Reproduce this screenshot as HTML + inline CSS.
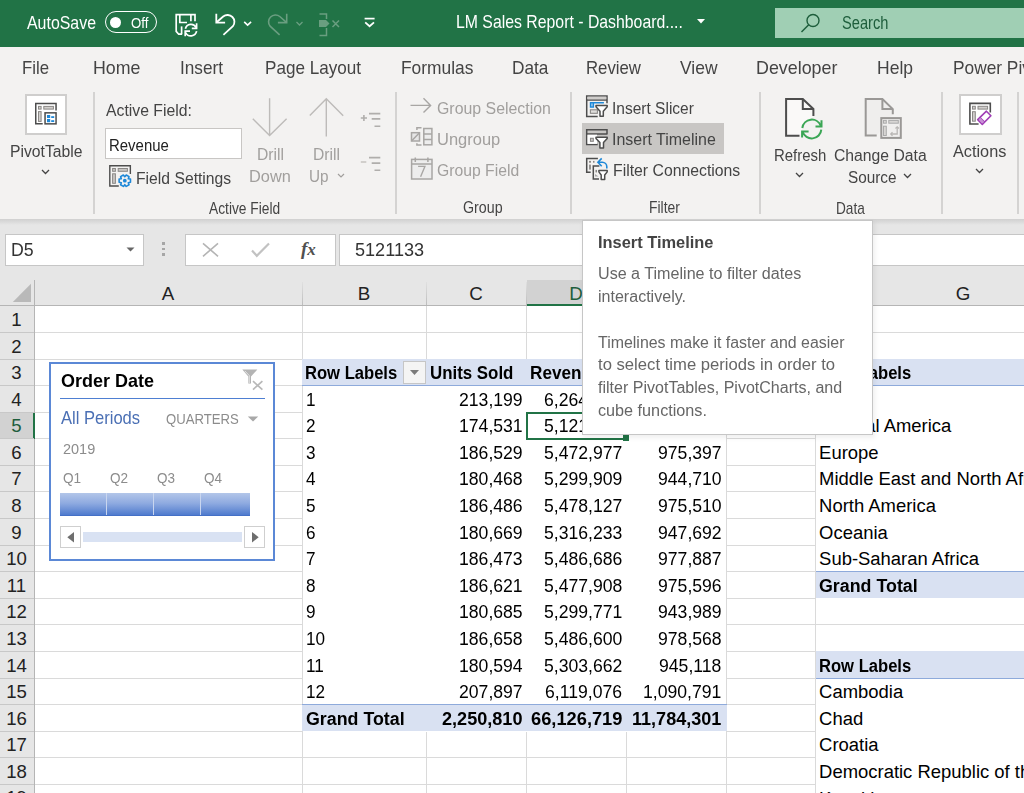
<!DOCTYPE html>
<html><head><meta charset="utf-8"><style>
html,body{margin:0;padding:0;}
body{width:1024px;height:793px;overflow:hidden;position:relative;background:#fff;font-family:'Liberation Sans',sans-serif;}
.t{position:absolute;white-space:pre;line-height:0;transform-origin:0 0;}
.r{position:absolute;box-sizing:border-box;}
svg.r{overflow:visible;}
</style></head><body>
<div class="r" style="left:0px;top:0px;width:1024px;height:47px;background:#217346"></div>
<div class="t" style="left:27.00px;top:22.95px;font-size:17.44px;font-weight:normal;color:#fff;transform:scaleX(0.9126);">AutoSave</div>
<div class="r" style="left:105px;top:11px;width:52px;height:22px;border:1.3px solid #fff;border-radius:11px"></div>
<div class="r" style="left:109.5px;top:16.5px;width:11px;height:11px;background:#fff;border-radius:50%"></div>
<div class="t" style="left:131.00px;top:23.06px;font-size:14.24px;font-weight:normal;color:#fff;transform:scaleX(0.9254);">Off</div>
<div class="t" style="left:456.00px;top:22.20px;font-size:18.17px;font-weight:normal;color:#fff;transform:scaleX(0.8713);">LM Sales Report - Dashboard....</div>
<svg class="r" style="left:697px;top:19px" width="8" height="5" viewBox="0 0 8 5"><path d="M0 0H8L4 4.5Z" fill="#fff"/></svg>
<div class="r" style="left:775px;top:8px;width:249px;height:30px;background:#a0cfb4"></div>
<svg class="r" style="left:800px;top:13px" width="21" height="20" viewBox="0 0 21 20"><circle cx="13" cy="7.5" r="6" fill="none" stroke="#1e5e3c" stroke-width="1.4"/><path d="M8.7 11.8L1.5 19" stroke="#1e5e3c" stroke-width="1.5"/></svg>
<div class="t" style="left:842.00px;top:23.45px;font-size:17.44px;font-weight:normal;color:#1e5e3c;transform:scaleX(0.8392);">Search</div>
<div class="r" style="left:0px;top:47px;width:1024px;height:172px;background:#f3f2f1"></div>
<div class="r" style="left:0px;top:219px;width:1024px;height:61px;background:#e6e6e6"></div>
<div class="r" style="left:0px;top:219px;width:1024px;height:6px;background:linear-gradient(#d0d0d0,#e6e6e6)"></div>
<div class="t" style="left:21.50px;top:67.70px;font-size:18.17px;font-weight:normal;color:#444444;transform:scaleX(0.9230);">File</div>
<div class="t" style="left:92.50px;top:67.70px;font-size:18.17px;font-weight:normal;color:#444444;transform:scaleX(0.9792);">Home</div>
<div class="t" style="left:180.00px;top:67.70px;font-size:18.17px;font-weight:normal;color:#444444;transform:scaleX(0.9467);">Insert</div>
<div class="t" style="left:264.50px;top:67.70px;font-size:18.17px;font-weight:normal;color:#444444;transform:scaleX(0.9410);">Page Layout</div>
<div class="t" style="left:401.00px;top:67.70px;font-size:18.17px;font-weight:normal;color:#444444;transform:scaleX(0.9569);">Formulas</div>
<div class="t" style="left:512.00px;top:67.70px;font-size:18.17px;font-weight:normal;color:#444444;transform:scaleX(0.9499);">Data</div>
<div class="t" style="left:586.00px;top:67.70px;font-size:18.17px;font-weight:normal;color:#444444;transform:scaleX(0.9229);">Review</div>
<div class="t" style="left:679.50px;top:67.70px;font-size:18.17px;font-weight:normal;color:#444444;transform:scaleX(0.9600);">View</div>
<div class="t" style="left:756.00px;top:67.70px;font-size:18.17px;font-weight:normal;color:#444444;transform:scaleX(0.9837);">Developer</div>
<div class="t" style="left:877.00px;top:67.70px;font-size:18.17px;font-weight:normal;color:#444444;transform:scaleX(0.9642);">Help</div>
<div class="t" style="left:953.00px;top:67.70px;font-size:18.17px;font-weight:normal;color:#444444;transform:scaleX(0.9533);">Power Pivot</div>
<div class="r" style="left:93px;top:92px;width:2px;height:122px;background:#d4d3d2"></div>
<div class="r" style="left:395px;top:92px;width:2px;height:122px;background:#d4d3d2"></div>
<div class="r" style="left:570px;top:92px;width:2px;height:122px;background:#d4d3d2"></div>
<div class="r" style="left:759px;top:92px;width:2px;height:122px;background:#d4d3d2"></div>
<div class="r" style="left:941px;top:92px;width:2px;height:122px;background:#d4d3d2"></div>
<div class="r" style="left:1017px;top:92px;width:2px;height:122px;background:#d4d3d2"></div>
<div class="r" style="left:25px;top:94px;width:42px;height:41px;background:#fff;border:2px solid #cfcecd"></div>
<div class="t" style="left:10.00px;top:151.30px;font-size:16.42px;font-weight:normal;color:#444444;transform:scaleX(0.9578);">PivotTable</div>
<svg class="r" style="left:41px;top:169px" width="9" height="6" viewBox="0 0 9 6"><path d="M1 1L4.5 4.5L8 1" fill="none" stroke="#444" stroke-width="1.3"/></svg>
<div class="t" style="left:105.70px;top:109.80px;font-size:16.42px;font-weight:normal;color:#444444;transform:scaleX(0.9616);">Active Field:</div>
<div class="r" style="left:105px;top:128px;width:137px;height:31px;background:#fff;border:1px solid #c8c6c4"></div>
<div class="t" style="left:109.40px;top:144.80px;font-size:16.42px;font-weight:normal;color:#222;transform:scaleX(0.9106);">Revenue</div>
<div class="t" style="left:135.70px;top:177.80px;font-size:16.42px;font-weight:normal;color:#444444;transform:scaleX(0.9575);">Field Settings</div>
<div class="t" style="left:256.60px;top:154.30px;font-size:16.42px;font-weight:normal;color:#a19f9d;transform:scaleX(0.9558);">Drill</div>
<div class="t" style="left:249.00px;top:175.80px;font-size:16.42px;font-weight:normal;color:#a19f9d;transform:scaleX(0.9961);">Down</div>
<div class="t" style="left:313.00px;top:154.30px;font-size:16.42px;font-weight:normal;color:#a19f9d;transform:scaleX(0.9558);">Drill</div>
<div class="t" style="left:309.40px;top:175.80px;font-size:16.42px;font-weight:normal;color:#a19f9d;transform:scaleX(0.9323);">Up</div>
<svg class="r" style="left:336.5px;top:172.5px" width="8" height="6" viewBox="0 0 8 6"><path d="M1 1L4 4L7 1" fill="none" stroke="#a19f9d" stroke-width="1.2"/></svg>
<div class="t" style="left:208.80px;top:208.55px;font-size:15.70px;font-weight:normal;color:#444444;transform:scaleX(0.8773);">Active Field</div>
<div class="t" style="left:437.00px;top:108.30px;font-size:16.42px;font-weight:normal;color:#a19f9d;transform:scaleX(0.9680);">Group Selection</div>
<div class="t" style="left:437.00px;top:139.30px;font-size:16.42px;font-weight:normal;color:#a19f9d;transform:scaleX(1.0050);">Ungroup</div>
<div class="t" style="left:437.00px;top:170.30px;font-size:16.42px;font-weight:normal;color:#a19f9d;transform:scaleX(0.9590);">Group Field</div>
<div class="t" style="left:462.70px;top:208.05px;font-size:15.70px;font-weight:normal;color:#444444;transform:scaleX(0.9074);">Group</div>
<div class="r" style="left:582px;top:123px;width:142px;height:31px;background:#c8c6c4"></div>
<div class="t" style="left:612.00px;top:108.30px;font-size:16.42px;font-weight:normal;color:#444444;transform:scaleX(0.9456);">Insert Slicer</div>
<div class="t" style="left:612.00px;top:139.30px;font-size:16.42px;font-weight:normal;color:#444444;transform:scaleX(0.9734);">Insert Timeline</div>
<div class="t" style="left:612.60px;top:170.30px;font-size:16.42px;font-weight:normal;color:#444444;transform:scaleX(0.9624);">Filter Connections</div>
<div class="t" style="left:649.00px;top:208.05px;font-size:15.70px;font-weight:normal;color:#444444;transform:scaleX(0.8838);">Filter</div>
<div class="t" style="left:774.20px;top:154.80px;font-size:16.42px;font-weight:normal;color:#444444;transform:scaleX(0.9098);">Refresh</div>
<svg class="r" style="left:795px;top:172px" width="9" height="6" viewBox="0 0 9 6"><path d="M1 1L4.5 4.5L8 1" fill="none" stroke="#444" stroke-width="1.3"/></svg>
<div class="t" style="left:833.50px;top:154.80px;font-size:16.42px;font-weight:normal;color:#444444;transform:scaleX(0.9585);">Change Data</div>
<div class="t" style="left:848.40px;top:176.80px;font-size:16.42px;font-weight:normal;color:#444444;transform:scaleX(0.9334);">Source</div>
<svg class="r" style="left:902.5px;top:172.5px" width="9" height="6" viewBox="0 0 9 6"><path d="M1 1L4.5 4.5L8 1" fill="none" stroke="#444" stroke-width="1.3"/></svg>
<div class="t" style="left:835.50px;top:208.55px;font-size:15.70px;font-weight:normal;color:#444444;transform:scaleX(0.8705);">Data</div>
<div class="r" style="left:959px;top:94px;width:43px;height:41px;background:#fff;border:2px solid #cfcecd"></div>
<div class="t" style="left:952.80px;top:151.30px;font-size:16.42px;font-weight:normal;color:#444444;transform:scaleX(0.9912);">Actions</div>
<svg class="r" style="left:975px;top:168px" width="9" height="6" viewBox="0 0 9 6"><path d="M1 1L4.5 4.5L8 1" fill="none" stroke="#444" stroke-width="1.3"/></svg>
<svg class="r" style="left:170px;top:8px" width="30" height="32" viewBox="0 0 30 32"><g fill="none" stroke="#ffffff" stroke-width="1.7"><path d="M12.1 26.2H8.7L6.2 23.4V6.7H25V13.3"/><path d="M9.8 6.7V14.5H17"/><path d="M20.9 6.7V13.3"/><path d="M11.6 18.4V26.2"/><path d="M15.4 20.8A5.8 5.8 0 0 1 26.2 19.6"/><path d="M26.6 15.2V20.4H21.8"/><path d="M26.6 23.2A5.8 5.8 0 0 1 15.6 24.5"/><path d="M15.2 28.2V23.2H20"/></g></svg>
<svg class="r" style="left:210px;top:8px" width="50" height="32" viewBox="0 0 50 32"><g fill="none" stroke="#ffffff" stroke-width="1.8"><path d="M6.3 5.8V14.6H15.1"/><path d="M6.6 14.3L13.2 8.5A6.9 6.9 0 0 1 22.9 18.2L13.4 26.9"/><path d="M34.2 13.9L37.6 17.1L41.1 13.9" stroke-width="1.6"/></g></svg>
<svg class="r" style="left:260px;top:8px" width="50" height="32" viewBox="0 0 50 32"><g fill="none" stroke="#6a9e80" stroke-width="1.6"><path d="M26.7 5.8V14.6H17.9"/><path d="M26.4 14.3L19.8 8.5A6.9 6.9 0 0 0 10.1 18.2L19.6 26.9"/><path d="M36.5 14L39.5 17L42.5 14" stroke-width="1.3"/></g></svg>
<svg class="r" style="left:314px;top:8px" width="32" height="32" viewBox="0 0 32 32"><g fill="none" stroke="#6a9e80" stroke-width="1.5"><path d="M5.5 6H12.5V11"/><path d="M12.5 20V27.5H5.5"/></g><path d="M5 12H12L15.5 15.5L12 19H5Z" fill="#6a9e80"/><path d="M18.5 12.5L25 19M25 12.5L18.5 19" stroke="#6a9e80" stroke-width="1.5"/></svg>
<svg class="r" style="left:362px;top:15px" width="16" height="16" viewBox="0 0 16 16"><path d="M2.6 3.6H12.6" stroke="#ffffff" stroke-width="1.7"/><path d="M3.2 7.4L7.6 11.2L12 7.4" fill="none" stroke="#ffffff" stroke-width="1.8"/></svg>
<svg class="r" style="left:30px;top:98px" width="32" height="32" viewBox="0 0 32 32"><path d="M12.7 25.85H5.75V5.55H26.05V12.5" fill="none" stroke="#4d4d4d" stroke-width="1.5"/><g fill="#d2d0ce" stroke="#8a8886" stroke-width="1"><rect x="8.5" y="8.4" width="2.6" height="2.7"/><rect x="13.8" y="8.4" width="9.6" height="2.7"/><rect x="8.5" y="13.6" width="2.6" height="9.8"/></g><rect x="15.05" y="14.85" width="11" height="11" fill="#fff" stroke="#4d4d4d" stroke-width="1.5"/><g fill="#1e88d8"><rect x="17" y="17" width="3.2" height="3"/><rect x="17" y="21" width="3.2" height="3.2"/><rect x="21.2" y="18.2" width="3" height="1.8"/><rect x="21.2" y="22.2" width="3" height="1.8"/></g></svg>
<svg class="r" style="left:105px;top:162px" width="32" height="28" viewBox="0 0 32 28"><path d="M13.8 24H4.8V3.7H25.35V12" fill="none" stroke="#4d4d4d" stroke-width="1.4"/><g fill="#c8c6c4" stroke="#8a8886" stroke-width="1"><rect x="7.6" y="6.5" width="2.8" height="2.8"/><rect x="13.2" y="6.5" width="9.2" height="2.8"/><rect x="7.6" y="11.8" width="2.8" height="9.5"/></g><circle cx="19.8" cy="18.7" r="6.6" fill="#f3f2f1"/><path d="M23.26 16.70L25.47 17.07L25.47 20.33L23.26 20.70L24.04 22.80L21.23 24.42L19.80 22.70L18.37 24.42L15.56 22.80L16.34 20.70L14.13 20.33L14.13 17.07L16.34 16.70L15.56 14.60L18.37 12.98L19.80 14.70L21.23 12.98L24.04 14.60Z" fill="none" stroke="#1e88d8" stroke-width="1.6" stroke-linejoin="round"/><circle cx="19.8" cy="18.7" r="1.9" fill="#1e88d8"/></svg>
<svg class="r" style="left:248px;top:92px" width="140" height="84" viewBox="0 0 140 84"><g fill="none" stroke="#bdbbb9" stroke-width="1.4"><path d="M21.6 6.2V43.5M4.8 26.7L21.6 43.5L38.6 26.7"/><path d="M78.3 6.6V44.4M61.8 23.5L78.3 6.8L95.2 23.7"/></g><g stroke="#b0aeac" stroke-width="1.6"><path d="M112.8 26H119M115.9 22.9V29.1"/><path d="M121 21.6H132.3M123.7 26.9H132.3M126.5 34.2H132.3"/><path d="M112.8 70H118.3" stroke="#c8c6c4"/><path d="M121 65.6H132.3M123.7 71.1H132.3M126.5 78.2H132.3"/></g></svg>
<svg class="r" style="left:406px;top:94px" width="30" height="90" viewBox="0 0 30 90"><g fill="none" stroke="#a8a6a4" stroke-width="1.4"><path d="M4.5 11.4H24.6M17.5 4.3L24.6 11.4L17.5 18.6"/></g><g transform="translate(0,28)" fill="none" stroke="#a8a6a4" stroke-width="1.5"><rect x="5.5" y="10.7" width="8" height="8.3" fill="#e6e6e6"/><path d="M5.5 19L13.5 10.7"/><path d="M10.9 8.1V5.8H15.5M10.9 21.2V23H15.5"/><rect x="17.8" y="6.5" width="8.1" height="16.3" fill="#ededed"/><path d="M17.8 11.9H25.9M17.8 17.4H25.9"/></g><g transform="translate(0,60)" fill="none" stroke="#a8a6a4" stroke-width="1.5"><rect x="5.6" y="5.4" width="20.4" height="19.6" fill="#ededed"/><path d="M5.6 10H26M9.3 3.4V7.9M21.9 3.4V7.9"/><path d="M12.1 12.4H18.9L14.6 22.7" stroke-width="1.4"/></g></svg>
<svg class="r" style="left:582px;top:92px" width="30" height="30" viewBox="0 0 30 30"><path d="M15.7 24.4H4.7V4H25V11.2M4.7 8H25" fill="none" stroke="#4d4d4d" stroke-width="1.5"/><rect x="5.4" y="4.7" width="18.9" height="2.6" fill="#cfcdcb"/><path d="M8.5 10.75H21.9" stroke="#1e88d8" stroke-width="1.5"/><rect x="8.5" y="10.75" width="2.9" height="4.3" fill="#9ccbf0" stroke="#1e88d8" stroke-width="1.4"/><rect x="8.4" y="17.8" width="7" height="3.5" fill="#e0dedc" stroke="#8a8886" stroke-width="1.1"/><path d="M14 13.6H25.2V14.8L21.3 19.3V24.3H18V19.3L14 14.8Z" fill="#fff" stroke="#4d4d4d" stroke-width="1.5" stroke-linejoin="round"/></svg>
<svg class="r" style="left:582px;top:124px" width="30" height="30" viewBox="0 0 30 30"><rect x="4.7" y="5.7" width="20.3" height="4.2" fill="#c8c6c4"/><path d="M15.7 20.6H4.7V5.7H25V10.5M4.7 9.9H25" fill="none" stroke="#4d4d4d" stroke-width="1.5"/><rect x="5.5" y="10.7" width="9.5" height="9.2" fill="#fff"/><rect x="8.5" y="14.3" width="2.8" height="3" fill="#d0cecc" stroke="#8a8886" stroke-width="1.1"/><path d="M14 13.2H25.2V14.4L21.5 18.5V24.1H17.9V18.5L14 14.4Z" fill="#fff" stroke="#4d4d4d" stroke-width="1.5" stroke-linejoin="round"/></svg>
<svg class="r" style="left:582px;top:154px" width="30" height="30" viewBox="0 0 30 30"><path d="M8.7 18.2H4.7V4.5H15.9" fill="none" stroke="#4d4d4d" stroke-width="1.5"/><g fill="#8a8886"><rect x="7" y="6.9" width="2" height="1.8"/><rect x="11" y="6.9" width="1.5" height="1.8"/><rect x="7.1" y="10.6" width="1.8" height="5"/></g><path d="M17 25H11.3V12H17.4" fill="none" stroke="#4d4d4d" stroke-width="1.5"/><rect x="13.5" y="15.9" width="1.5" height="2.5" fill="#8a8886"/><path d="M13 22.5H16.6L13 20Z" fill="#aaa"/><path d="M16.9 16.6H25.2V17.9L22.7 21V25.4H19.2V21L16.9 17.9Z" fill="#fff" stroke="#4d4d4d" stroke-width="1.5" stroke-linejoin="round"/><path d="M24.8 14.6V12.8A4.5 4.5 0 0 0 20.3 8.3H16.2M19.7 4.4L15.9 8.3L19.7 12.2" fill="none" stroke="#1e88d8" stroke-width="1.6"/></svg>
<svg class="r" style="left:780px;top:94px" width="50" height="50" viewBox="0 0 50 50"><path d="M19.5 41.8H6.1V5H22.8L33.4 15V22" fill="#faf9f8" stroke="#4d4d4d" stroke-width="2"/><path d="M22.8 5V15H33.4" fill="none" stroke="#4d4d4d" stroke-width="2"/><circle cx="31.8" cy="34.7" r="10" fill="#f3f2f1"/><g fill="none" stroke="#3aa655" stroke-width="2"><path d="M22.3 34A9.6 9.6 0 0 1 40.8 31.8"/><path d="M41.5 26.3V32.4H35.5"/><path d="M41.3 35.6A9.6 9.6 0 0 1 22.6 37.8"/><path d="M22.1 43.6V37.4H28.6"/></g></svg>
<svg class="r" style="left:860px;top:94px" width="50" height="50" viewBox="0 0 50 50"><path d="M16.7 41.6H5.7V5H22.4L32.8 15.1V20.2" fill="#efeeed" stroke="#9a9896" stroke-width="2"/><path d="M22.4 5V15.1H32.8" fill="none" stroke="#9a9896" stroke-width="2"/><rect x="21.3" y="24.1" width="19.5" height="19.8" fill="#f0efee" stroke="#9a9896" stroke-width="2"/><g fill="#d8d6d4" stroke="#aaa" stroke-width="1"><rect x="23.5" y="26.4" width="2.8" height="2.8"/><rect x="28.8" y="26.4" width="9.5" height="2.8"/><rect x="23.5" y="32.2" width="2.8" height="9.3"/></g><path d="M37.2 33V40H31" fill="none" stroke="#b8b6b4" stroke-width="1.3"/><path d="M35.5 34.5L37.2 32.8L38.9 34.5M32.5 38.3L30.8 40L32.5 41.7" fill="none" stroke="#b8b6b4" stroke-width="1.3"/></svg>
<svg class="r" style="left:960px;top:96px" width="40" height="36" viewBox="0 0 40 36"><path d="M18.6 28H9.9V7.4H30.3V16.4" fill="none" stroke="#4d4d4d" stroke-width="1.6"/><g fill="#d0cecc" stroke="#8a8886" stroke-width="1"><rect x="12.5" y="10.3" width="2.8" height="2.8"/><rect x="18" y="10.3" width="9.6" height="2.8"/><rect x="12.5" y="15.7" width="2.8" height="9.5"/></g><path d="M17.7 23.6L26.4 15.2L30.9 19.8L22.3 28.4Z" fill="#fff" stroke="#a03db5" stroke-width="1.6" stroke-linejoin="round"/><path d="M20 21.4L24.6 26" stroke="#a03db5" stroke-width="1.2"/><path d="M18.6 23.6L22.3 27.4L24 25.7L20.3 22Z" fill="#c890d6"/></svg>
<div class="r" style="left:5px;top:234px;width:139px;height:32px;background:#fff;border:1px solid #c6c6c6"></div>
<div class="t" style="left:11.00px;top:250.25px;font-size:18.02px;font-weight:normal;color:#333;transform:scaleX(0.9840);">D5</div>
<svg class="r" style="left:126px;top:247px" width="9" height="5" viewBox="0 0 9 5"><path d="M0.5 0.5H8.5L4.5 4.5Z" fill="#666"/></svg>
<div class="r" style="left:162.3px;top:242.3px;width:2.6px;height:2.6px;background:#a6a6a6"></div>
<div class="r" style="left:162.3px;top:247.8px;width:2.6px;height:2.6px;background:#a6a6a6"></div>
<div class="r" style="left:162.3px;top:253.3px;width:2.6px;height:2.6px;background:#a6a6a6"></div>
<div class="r" style="left:185px;top:234px;width:151px;height:32px;background:#fff;border:1px solid #c6c6c6"></div>
<svg class="r" style="left:200px;top:240px" width="22" height="20" viewBox="0 0 22 20"><path d="M3 3.3L18 16.3M18 3.3L3 16.3" stroke="#b4b4b4" stroke-width="1.6"/></svg>
<svg class="r" style="left:249px;top:240px" width="24" height="20" viewBox="0 0 24 20"><path d="M3 10.5L7.8 15.8L20 3.5" fill="none" stroke="#c2c2c2" stroke-width="2.2"/></svg>
<div class="t" style="left:301px;top:249px;font-family:'Liberation Serif',serif;font-style:italic;font-weight:bold;font-size:19px;color:#505050;letter-spacing:0px">f<span style="font-size:17px">x</span></div>
<div class="r" style="left:339px;top:234px;width:700px;height:32px;background:#fff;border:1px solid #c6c6c6"></div>
<div class="t" style="left:355.20px;top:250.25px;font-size:18.02px;font-weight:normal;color:#333;transform:scaleX(1.0036);">5121133</div>
<div class="r" style="left:0px;top:280px;width:1024px;height:26px;background:#e6e6e6"></div>
<div class="r" style="left:0px;top:306px;width:35px;height:500px;background:#e6e6e6"></div>
<div class="r" style="left:35px;top:306px;width:989px;height:500px;background:#fff"></div>
<svg class="r" style="left:12px;top:283px" width="20" height="20" viewBox="0 0 20 20"><path d="M19 0.7V19H0.8Z" fill="#b9b9b9"/></svg>
<div class="r" style="left:34px;top:280px;width:1px;height:520px;background:#b5b5b5"></div>
<div class="r" style="left:0px;top:305px;width:1024px;height:1px;background:#b5b5b5"></div>
<div class="r" style="left:527px;top:280px;width:100px;height:25px;background:#d2d2d2"></div>
<div class="r" style="left:527px;top:304px;width:100px;height:2px;background:#217346"></div>
<div class="r" style="left:302px;top:282px;width:1px;height:23px;background:linear-gradient(#e0e0e0,#bdbdbd)"></div>
<div class="r" style="left:426px;top:282px;width:1px;height:23px;background:linear-gradient(#e0e0e0,#bdbdbd)"></div>
<div class="r" style="left:526px;top:282px;width:1px;height:23px;background:linear-gradient(#e0e0e0,#bdbdbd)"></div>
<div class="r" style="left:626px;top:282px;width:1px;height:23px;background:linear-gradient(#e0e0e0,#bdbdbd)"></div>
<div class="r" style="left:726px;top:282px;width:1px;height:23px;background:linear-gradient(#e0e0e0,#bdbdbd)"></div>
<div class="r" style="left:815px;top:282px;width:1px;height:23px;background:linear-gradient(#e0e0e0,#bdbdbd)"></div>
<div class="r" style="left:1111px;top:282px;width:1px;height:23px;background:linear-gradient(#e0e0e0,#bdbdbd)"></div>
<div class="t" style="left:161.72px;top:294.49px;font-size:18.75px;font-weight:normal;color:#222;">A</div>
<div class="t" style="left:357.77px;top:294.49px;font-size:18.75px;font-weight:normal;color:#222;">B</div>
<div class="t" style="left:469.25px;top:294.49px;font-size:18.75px;font-weight:normal;color:#222;">C</div>
<div class="t" style="left:569.25px;top:294.49px;font-size:18.75px;font-weight:normal;color:#1e5e3c;">D</div>
<div class="t" style="left:669.77px;top:294.49px;font-size:18.75px;font-weight:normal;color:#222;">E</div>
<div class="t" style="left:764.78px;top:294.49px;font-size:18.75px;font-weight:normal;color:#222;">F</div>
<div class="t" style="left:955.69px;top:294.49px;font-size:18.75px;font-weight:normal;color:#222;">G</div>
<div class="r" style="left:0px;top:413px;width:34px;height:26px;background:#d2d2d2"></div>
<div class="r" style="left:33px;top:413px;width:2px;height:26px;background:#217346"></div>
<div class="r" style="left:0px;top:332px;width:34px;height:1px;background:#c8c8c8"></div>
<div class="t" style="left:11.34px;top:320.34px;font-size:18.60px;font-weight:normal;color:#222;">1</div>
<div class="r" style="left:0px;top:359px;width:34px;height:1px;background:#c8c8c8"></div>
<div class="t" style="left:11.34px;top:347.34px;font-size:18.60px;font-weight:normal;color:#222;">2</div>
<div class="r" style="left:0px;top:385px;width:34px;height:1px;background:#c8c8c8"></div>
<div class="t" style="left:11.34px;top:373.34px;font-size:18.60px;font-weight:normal;color:#222;">3</div>
<div class="r" style="left:0px;top:412px;width:34px;height:1px;background:#c8c8c8"></div>
<div class="t" style="left:11.34px;top:400.34px;font-size:18.60px;font-weight:normal;color:#222;">4</div>
<div class="r" style="left:0px;top:438px;width:34px;height:1px;background:#c8c8c8"></div>
<div class="t" style="left:11.34px;top:426.34px;font-size:18.60px;font-weight:normal;color:#1e5e3c;">5</div>
<div class="r" style="left:0px;top:465px;width:34px;height:1px;background:#c8c8c8"></div>
<div class="t" style="left:11.34px;top:453.34px;font-size:18.60px;font-weight:normal;color:#222;">6</div>
<div class="r" style="left:0px;top:491px;width:34px;height:1px;background:#c8c8c8"></div>
<div class="t" style="left:11.34px;top:479.34px;font-size:18.60px;font-weight:normal;color:#222;">7</div>
<div class="r" style="left:0px;top:518px;width:34px;height:1px;background:#c8c8c8"></div>
<div class="t" style="left:11.34px;top:506.34px;font-size:18.60px;font-weight:normal;color:#222;">8</div>
<div class="r" style="left:0px;top:545px;width:34px;height:1px;background:#c8c8c8"></div>
<div class="t" style="left:11.34px;top:533.34px;font-size:18.60px;font-weight:normal;color:#222;">9</div>
<div class="r" style="left:0px;top:571px;width:34px;height:1px;background:#c8c8c8"></div>
<div class="t" style="left:6.17px;top:559.34px;font-size:18.60px;font-weight:normal;color:#222;">10</div>
<div class="r" style="left:0px;top:598px;width:34px;height:1px;background:#c8c8c8"></div>
<div class="t" style="left:6.83px;top:586.34px;font-size:18.60px;font-weight:normal;color:#222;">11</div>
<div class="r" style="left:0px;top:624px;width:34px;height:1px;background:#c8c8c8"></div>
<div class="t" style="left:6.17px;top:612.34px;font-size:18.60px;font-weight:normal;color:#222;">12</div>
<div class="r" style="left:0px;top:651px;width:34px;height:1px;background:#c8c8c8"></div>
<div class="t" style="left:6.17px;top:639.34px;font-size:18.60px;font-weight:normal;color:#222;">13</div>
<div class="r" style="left:0px;top:678px;width:34px;height:1px;background:#c8c8c8"></div>
<div class="t" style="left:6.17px;top:666.34px;font-size:18.60px;font-weight:normal;color:#222;">14</div>
<div class="r" style="left:0px;top:704px;width:34px;height:1px;background:#c8c8c8"></div>
<div class="t" style="left:6.17px;top:692.34px;font-size:18.60px;font-weight:normal;color:#222;">15</div>
<div class="r" style="left:0px;top:731px;width:34px;height:1px;background:#c8c8c8"></div>
<div class="t" style="left:6.17px;top:719.34px;font-size:18.60px;font-weight:normal;color:#222;">16</div>
<div class="r" style="left:0px;top:757px;width:34px;height:1px;background:#c8c8c8"></div>
<div class="t" style="left:6.17px;top:745.34px;font-size:18.60px;font-weight:normal;color:#222;">17</div>
<div class="r" style="left:0px;top:784px;width:34px;height:1px;background:#c8c8c8"></div>
<div class="t" style="left:6.17px;top:772.34px;font-size:18.60px;font-weight:normal;color:#222;">18</div>
<div class="r" style="left:0px;top:810px;width:34px;height:1px;background:#c8c8c8"></div>
<div class="t" style="left:6.17px;top:798.34px;font-size:18.60px;font-weight:normal;color:#222;">19</div>
<div class="r" style="left:35px;top:332px;width:989px;height:1px;background:#dadada"></div>
<div class="r" style="left:35px;top:359px;width:989px;height:1px;background:#dadada"></div>
<div class="r" style="left:35px;top:385px;width:989px;height:1px;background:#dadada"></div>
<div class="r" style="left:35px;top:412px;width:989px;height:1px;background:#dadada"></div>
<div class="r" style="left:35px;top:438px;width:989px;height:1px;background:#dadada"></div>
<div class="r" style="left:35px;top:465px;width:989px;height:1px;background:#dadada"></div>
<div class="r" style="left:35px;top:491px;width:989px;height:1px;background:#dadada"></div>
<div class="r" style="left:35px;top:518px;width:989px;height:1px;background:#dadada"></div>
<div class="r" style="left:35px;top:545px;width:989px;height:1px;background:#dadada"></div>
<div class="r" style="left:35px;top:571px;width:989px;height:1px;background:#dadada"></div>
<div class="r" style="left:35px;top:598px;width:989px;height:1px;background:#dadada"></div>
<div class="r" style="left:35px;top:624px;width:989px;height:1px;background:#dadada"></div>
<div class="r" style="left:35px;top:651px;width:989px;height:1px;background:#dadada"></div>
<div class="r" style="left:35px;top:678px;width:989px;height:1px;background:#dadada"></div>
<div class="r" style="left:35px;top:704px;width:989px;height:1px;background:#dadada"></div>
<div class="r" style="left:35px;top:731px;width:989px;height:1px;background:#dadada"></div>
<div class="r" style="left:35px;top:757px;width:989px;height:1px;background:#dadada"></div>
<div class="r" style="left:35px;top:784px;width:989px;height:1px;background:#dadada"></div>
<div class="r" style="left:302px;top:306px;width:1px;height:487px;background:#dadada"></div>
<div class="r" style="left:426px;top:306px;width:1px;height:487px;background:#dadada"></div>
<div class="r" style="left:526px;top:306px;width:1px;height:487px;background:#dadada"></div>
<div class="r" style="left:626px;top:306px;width:1px;height:487px;background:#dadada"></div>
<div class="r" style="left:726px;top:306px;width:1px;height:487px;background:#dadada"></div>
<div class="r" style="left:815px;top:306px;width:1px;height:487px;background:#dadada"></div>
<div class="r" style="left:303px;top:360px;width:423px;height:372px;background:#fff"></div>
<div class="r" style="left:302px;top:359px;width:425px;height:26px;background:#d9e1f2"></div>
<div class="r" style="left:302px;top:385px;width:425px;height:1px;background:#8eaadb"></div>
<div class="r" style="left:302px;top:705px;width:425px;height:26px;background:#d9e1f2"></div>
<div class="r" style="left:302px;top:704px;width:425px;height:1px;background:#8eaadb"></div>
<div class="t" style="left:305.40px;top:372.99px;font-size:18.46px;font-weight:bold;color:#000;transform:scaleX(0.9000);">Row Labels</div>
<div class="r" style="left:403px;top:361px;width:23px;height:23px;background:#f4f4f4;border:1px solid #c6c6c6"></div>
<svg class="r" style="left:409px;top:369px" width="11" height="7" viewBox="0 0 11 7"><path d="M1 1H10L5.5 6Z" fill="#7a7a7a"/></svg>
<div class="t" style="left:429.70px;top:372.99px;font-size:18.46px;font-weight:bold;color:#000;transform:scaleX(0.9150);">Units Sold</div>
<div class="t" style="left:530.40px;top:372.99px;font-size:18.46px;font-weight:bold;color:#000;transform:scaleX(0.9300);">Revenue</div>
<div class="t" style="left:630.00px;top:372.99px;font-size:18.46px;font-weight:bold;color:#000;transform:scaleX(0.9300);">Profit</div>
<div class="t" style="left:305.80px;top:399.59px;font-size:18.46px;font-weight:normal;color:#000;transform:scaleX(0.9300);">1</div>
<div class="t" style="left:458.77px;top:399.59px;font-size:18.46px;font-weight:normal;color:#000;transform:scaleX(0.9550);">213,199</div>
<div class="t" style="left:544.05px;top:399.59px;font-size:18.46px;font-weight:normal;color:#000;transform:scaleX(0.9550);">6,264,080</div>
<div class="t" style="left:644.37px;top:399.59px;font-size:18.46px;font-weight:normal;color:#000;transform:scaleX(0.9550);">1,115,967</div>
<div class="t" style="left:305.80px;top:426.19px;font-size:18.46px;font-weight:normal;color:#000;transform:scaleX(0.9300);">2</div>
<div class="t" style="left:458.77px;top:426.19px;font-size:18.46px;font-weight:normal;color:#000;transform:scaleX(0.9550);">174,531</div>
<div class="t" style="left:544.05px;top:426.19px;font-size:18.46px;font-weight:normal;color:#000;transform:scaleX(0.9550);">5,121,133</div>
<div class="t" style="left:657.77px;top:426.19px;font-size:18.46px;font-weight:normal;color:#000;transform:scaleX(0.9550);">913,521</div>
<div class="t" style="left:305.80px;top:452.79px;font-size:18.46px;font-weight:normal;color:#000;transform:scaleX(0.9300);">3</div>
<div class="t" style="left:458.77px;top:452.79px;font-size:18.46px;font-weight:normal;color:#000;transform:scaleX(0.9550);">186,529</div>
<div class="t" style="left:544.05px;top:452.79px;font-size:18.46px;font-weight:normal;color:#000;transform:scaleX(0.9550);">5,472,977</div>
<div class="t" style="left:657.77px;top:452.79px;font-size:18.46px;font-weight:normal;color:#000;transform:scaleX(0.9550);">975,397</div>
<div class="t" style="left:305.80px;top:479.39px;font-size:18.46px;font-weight:normal;color:#000;transform:scaleX(0.9300);">4</div>
<div class="t" style="left:458.77px;top:479.39px;font-size:18.46px;font-weight:normal;color:#000;transform:scaleX(0.9550);">180,468</div>
<div class="t" style="left:544.05px;top:479.39px;font-size:18.46px;font-weight:normal;color:#000;transform:scaleX(0.9550);">5,299,909</div>
<div class="t" style="left:657.77px;top:479.39px;font-size:18.46px;font-weight:normal;color:#000;transform:scaleX(0.9550);">944,710</div>
<div class="t" style="left:305.80px;top:505.99px;font-size:18.46px;font-weight:normal;color:#000;transform:scaleX(0.9300);">5</div>
<div class="t" style="left:458.77px;top:505.99px;font-size:18.46px;font-weight:normal;color:#000;transform:scaleX(0.9550);">186,486</div>
<div class="t" style="left:544.05px;top:505.99px;font-size:18.46px;font-weight:normal;color:#000;transform:scaleX(0.9550);">5,478,127</div>
<div class="t" style="left:657.77px;top:505.99px;font-size:18.46px;font-weight:normal;color:#000;transform:scaleX(0.9550);">975,510</div>
<div class="t" style="left:305.80px;top:532.59px;font-size:18.46px;font-weight:normal;color:#000;transform:scaleX(0.9300);">6</div>
<div class="t" style="left:458.77px;top:532.59px;font-size:18.46px;font-weight:normal;color:#000;transform:scaleX(0.9550);">180,669</div>
<div class="t" style="left:544.05px;top:532.59px;font-size:18.46px;font-weight:normal;color:#000;transform:scaleX(0.9550);">5,316,233</div>
<div class="t" style="left:657.77px;top:532.59px;font-size:18.46px;font-weight:normal;color:#000;transform:scaleX(0.9550);">947,692</div>
<div class="t" style="left:305.80px;top:559.19px;font-size:18.46px;font-weight:normal;color:#000;transform:scaleX(0.9300);">7</div>
<div class="t" style="left:458.77px;top:559.19px;font-size:18.46px;font-weight:normal;color:#000;transform:scaleX(0.9550);">186,473</div>
<div class="t" style="left:544.05px;top:559.19px;font-size:18.46px;font-weight:normal;color:#000;transform:scaleX(0.9550);">5,486,686</div>
<div class="t" style="left:657.77px;top:559.19px;font-size:18.46px;font-weight:normal;color:#000;transform:scaleX(0.9550);">977,887</div>
<div class="t" style="left:305.80px;top:585.79px;font-size:18.46px;font-weight:normal;color:#000;transform:scaleX(0.9300);">8</div>
<div class="t" style="left:458.77px;top:585.79px;font-size:18.46px;font-weight:normal;color:#000;transform:scaleX(0.9550);">186,621</div>
<div class="t" style="left:544.05px;top:585.79px;font-size:18.46px;font-weight:normal;color:#000;transform:scaleX(0.9550);">5,477,908</div>
<div class="t" style="left:657.77px;top:585.79px;font-size:18.46px;font-weight:normal;color:#000;transform:scaleX(0.9550);">975,596</div>
<div class="t" style="left:305.80px;top:612.39px;font-size:18.46px;font-weight:normal;color:#000;transform:scaleX(0.9300);">9</div>
<div class="t" style="left:458.77px;top:612.39px;font-size:18.46px;font-weight:normal;color:#000;transform:scaleX(0.9550);">180,685</div>
<div class="t" style="left:544.05px;top:612.39px;font-size:18.46px;font-weight:normal;color:#000;transform:scaleX(0.9550);">5,299,771</div>
<div class="t" style="left:657.77px;top:612.39px;font-size:18.46px;font-weight:normal;color:#000;transform:scaleX(0.9550);">943,989</div>
<div class="t" style="left:305.80px;top:638.99px;font-size:18.46px;font-weight:normal;color:#000;transform:scaleX(0.9300);">10</div>
<div class="t" style="left:458.77px;top:638.99px;font-size:18.46px;font-weight:normal;color:#000;transform:scaleX(0.9550);">186,658</div>
<div class="t" style="left:544.05px;top:638.99px;font-size:18.46px;font-weight:normal;color:#000;transform:scaleX(0.9550);">5,486,600</div>
<div class="t" style="left:657.77px;top:638.99px;font-size:18.46px;font-weight:normal;color:#000;transform:scaleX(0.9550);">978,568</div>
<div class="t" style="left:305.80px;top:665.59px;font-size:18.46px;font-weight:normal;color:#000;transform:scaleX(0.9300);">11</div>
<div class="t" style="left:458.77px;top:665.59px;font-size:18.46px;font-weight:normal;color:#000;transform:scaleX(0.9550);">180,594</div>
<div class="t" style="left:544.05px;top:665.59px;font-size:18.46px;font-weight:normal;color:#000;transform:scaleX(0.9550);">5,303,662</div>
<div class="t" style="left:659.09px;top:665.59px;font-size:18.46px;font-weight:normal;color:#000;transform:scaleX(0.9550);">945,118</div>
<div class="t" style="left:305.80px;top:692.19px;font-size:18.46px;font-weight:normal;color:#000;transform:scaleX(0.9300);">12</div>
<div class="t" style="left:458.77px;top:692.19px;font-size:18.46px;font-weight:normal;color:#000;transform:scaleX(0.9550);">207,897</div>
<div class="t" style="left:545.37px;top:692.19px;font-size:18.46px;font-weight:normal;color:#000;transform:scaleX(0.9550);">6,119,076</div>
<div class="t" style="left:643.05px;top:692.19px;font-size:18.46px;font-weight:normal;color:#000;transform:scaleX(0.9550);">1,090,791</div>
<div class="t" style="left:305.50px;top:718.79px;font-size:18.46px;font-weight:bold;color:#000;transform:scaleX(0.9660);">Grand Total</div>
<div class="t" style="left:441.92px;top:718.79px;font-size:18.46px;font-weight:bold;color:#000;transform:scaleX(0.9810);">2,250,810</div>
<div class="t" style="left:530.94px;top:718.79px;font-size:18.46px;font-weight:bold;color:#000;transform:scaleX(0.9910);">66,126,719</div>
<div class="t" style="left:632.05px;top:718.79px;font-size:18.46px;font-weight:bold;color:#000;transform:scaleX(0.9790);">11,784,301</div>
<div class="r" style="left:816px;top:360px;width:208px;height:239px;background:#fff"></div>
<div class="r" style="left:816px;top:359px;width:208px;height:26px;background:#d9e1f2"></div>
<div class="r" style="left:816px;top:385px;width:208px;height:1px;background:#8eaadb"></div>
<div class="r" style="left:816px;top:572px;width:208px;height:26px;background:#d9e1f2"></div>
<div class="r" style="left:816px;top:571px;width:208px;height:1px;background:#8eaadb"></div>
<div class="r" style="left:816px;top:652px;width:208px;height:300px;background:#fff"></div>
<div class="r" style="left:816px;top:651px;width:208px;height:27px;background:#d9e1f2"></div>
<div class="r" style="left:816px;top:678px;width:208px;height:1px;background:#8eaadb"></div>
<div class="t" style="left:819.00px;top:372.99px;font-size:18.46px;font-weight:bold;color:#000;transform:scaleX(0.9000);">Row Labels</div>
<div class="t" style="left:819.10px;top:399.59px;font-size:18.46px;font-weight:normal;color:#000;">Asia</div>
<div class="t" style="left:820.10px;top:426.19px;font-size:18.46px;font-weight:normal;color:#000;">Central America</div>
<div class="t" style="left:819.10px;top:452.79px;font-size:18.46px;font-weight:normal;color:#000;">Europe</div>
<div class="t" style="left:819.10px;top:479.39px;font-size:18.46px;font-weight:normal;color:#000;">Middle East and North Africa</div>
<div class="t" style="left:819.10px;top:505.99px;font-size:18.46px;font-weight:normal;color:#000;">North America</div>
<div class="t" style="left:819.10px;top:532.59px;font-size:18.46px;font-weight:normal;color:#000;">Oceania</div>
<div class="t" style="left:819.10px;top:559.19px;font-size:18.46px;font-weight:normal;color:#000;">Sub-Saharan Africa</div>
<div class="t" style="left:819.00px;top:585.79px;font-size:18.46px;font-weight:bold;color:#000;transform:scaleX(0.9670);">Grand Total</div>
<div class="t" style="left:819.00px;top:665.59px;font-size:18.46px;font-weight:bold;color:#000;transform:scaleX(0.9000);">Row Labels</div>
<div class="t" style="left:819.10px;top:692.19px;font-size:18.46px;font-weight:normal;color:#000;">Cambodia</div>
<div class="t" style="left:819.10px;top:718.79px;font-size:18.46px;font-weight:normal;color:#000;">Chad</div>
<div class="t" style="left:819.10px;top:745.39px;font-size:18.46px;font-weight:normal;color:#000;">Croatia</div>
<div class="t" style="left:819.10px;top:771.99px;font-size:18.46px;font-weight:normal;color:#000;">Democratic Republic of the Congo</div>
<div class="t" style="left:819.10px;top:798.59px;font-size:18.46px;font-weight:normal;color:#000;">Kazakhstan</div>
<div class="r" style="left:526px;top:412px;width:101px;height:28px;border:2px solid #217346"></div>
<div class="r" style="left:623px;top:435px;width:6px;height:6px;background:#217346"></div>
<div class="r" style="left:49px;top:362px;width:226px;height:199px;background:#fff;border:2px solid #5b88d6"></div>
<div class="t" style="left:60.80px;top:380.65px;font-size:18.31px;font-weight:bold;color:#000;transform:scaleX(0.9822);">Order Date</div>
<svg class="r" style="left:236px;top:362px" width="30" height="32" viewBox="0 0 30 32"><path d="M6.3 7.5H21.4L15 14.6V21.6H12.3V14.6Z" fill="#b4b4b4"/><path d="M8.8 8.9L13.3 13.6V21" fill="none" stroke="#e8e8e8" stroke-width="0.9"/><path d="M17 19.2L26.4 27.6M17 27.6L26.4 19.2" stroke="#b8b8b8" stroke-width="1.7"/></svg>
<div class="r" style="left:59.5px;top:398px;width:205px;height:1.3px;background:#4e7fd2"></div>
<div class="t" style="left:60.50px;top:417.59px;font-size:18.46px;font-weight:normal;color:#4a6fb4;transform:scaleX(0.8976);">All Periods</div>
<div class="t" style="left:166.30px;top:418.60px;font-size:15.55px;font-weight:normal;color:#8c8c8c;transform:scaleX(0.8449);">QUARTERS</div>
<svg class="r" style="left:247px;top:416px" width="12" height="7" viewBox="0 0 12 7"><path d="M0.8 0.5H11.2L6 5.6Z" fill="#a8a8a8"/></svg>
<div class="t" style="left:62.80px;top:449.16px;font-size:14.83px;font-weight:normal;color:#8c8c8c;transform:scaleX(0.9761);">2019</div>
<div class="t" style="left:62.80px;top:478.16px;font-size:14.83px;font-weight:normal;color:#8c8c8c;transform:scaleX(0.9196);">Q1</div>
<div class="t" style="left:109.70px;top:478.16px;font-size:14.83px;font-weight:normal;color:#8c8c8c;transform:scaleX(0.9145);">Q2</div>
<div class="t" style="left:156.50px;top:478.16px;font-size:14.83px;font-weight:normal;color:#8c8c8c;transform:scaleX(0.9095);">Q3</div>
<div class="t" style="left:204.00px;top:478.16px;font-size:14.83px;font-weight:normal;color:#8c8c8c;transform:scaleX(0.9145);">Q4</div>
<div class="r" style="left:60px;top:493px;width:190px;height:23px;background:linear-gradient(#b3c6e9,#8eaae0 45%,#4a77cc)"></div>
<div class="r" style="left:105.5px;top:493px;width:1.4px;height:23px;background:#c9d6ef"></div>
<div class="r" style="left:152.5px;top:493px;width:1.4px;height:23px;background:#c9d6ef"></div>
<div class="r" style="left:200px;top:493px;width:1.4px;height:23px;background:#c9d6ef"></div>
<div class="r" style="left:60px;top:515px;width:190px;height:1px;background:#4470c6"></div>
<div class="r" style="left:60px;top:526px;width:21px;height:22px;background:#fff;border:1.5px solid #cfcfcf"></div>
<svg class="r" style="left:66px;top:531px" width="10" height="12" viewBox="0 0 10 12"><path d="M8 0.9V11.5L1.3 6.2Z" fill="#6e6e6e"/></svg>
<div class="r" style="left:83px;top:532px;width:159px;height:10px;background:#d9e2f3"></div>
<div class="r" style="left:244px;top:526px;width:21px;height:22px;background:#fff;border:1.5px solid #cfcfcf"></div>
<svg class="r" style="left:250px;top:531px" width="10" height="12" viewBox="0 0 10 12"><path d="M2 0.9V11.5L8.7 6.2Z" fill="#6e6e6e"/></svg>
<div class="r" style="left:583px;top:222px;width:292px;height:216px;background:rgba(0,0,0,0.06);filter:blur(2px)"></div>
<div class="r" style="left:582px;top:220px;width:291px;height:215px;background:#fff;border:1px solid #c6c6c6"></div>
<div class="t" style="left:598.30px;top:241.50px;font-size:17.30px;font-weight:bold;color:#444;transform:scaleX(0.9494);">Insert Timeline</div>
<div class="t" style="left:598.30px;top:273.00px;font-size:17.30px;font-weight:normal;color:#666666;transform:scaleX(0.9322);">Use a Timeline to filter dates</div>
<div class="t" style="left:598.30px;top:295.50px;font-size:17.30px;font-weight:normal;color:#666666;transform:scaleX(0.9286);">interactively.</div>
<div class="t" style="left:598.30px;top:341.50px;font-size:17.30px;font-weight:normal;color:#666666;transform:scaleX(0.9220);">Timelines make it faster and easier</div>
<div class="t" style="left:598.30px;top:364.00px;font-size:17.30px;font-weight:normal;color:#666666;transform:scaleX(0.9641);">to select time periods in order to</div>
<div class="t" style="left:598.30px;top:387.00px;font-size:17.30px;font-weight:normal;color:#666666;transform:scaleX(0.9278);">filter PivotTables, PivotCharts, and</div>
<div class="t" style="left:598.30px;top:409.50px;font-size:17.30px;font-weight:normal;color:#666666;transform:scaleX(0.9371);">cube functions.</div>
</body></html>
